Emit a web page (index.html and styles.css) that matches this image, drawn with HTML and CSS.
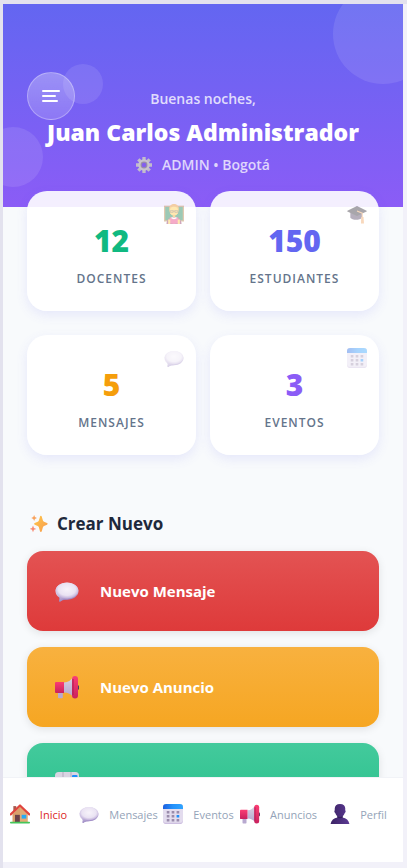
FILE: index.html
```html
<!DOCTYPE html>
<html lang="es">
<head>
    <meta charset="UTF-8">
    <meta name="viewport" content="width=device-width, initial-scale=1.0">
    <title>Inicio</title>
    <link rel="stylesheet" href="styles.css">
</head>
<body>
    <!-- Icon sprite -->
    <svg class="sprite" aria-hidden="true">
        <defs>
            <linearGradient id="g-bubble" x1="0" y1="0" x2="0.3" y2="1">
                <stop offset="0" stop-color="#f4f0fa"/>
                <stop offset="0.55" stop-color="#dcd2ea"/>
                <stop offset="1" stop-color="#9a86c2"/>
            </linearGradient>
            <radialGradient id="g-bubble-light" cx="0.5" cy="0.42" r="0.55">
                <stop offset="0" stop-color="#f7f3fa"/>
                <stop offset="0.7" stop-color="#eae3f3"/>
                <stop offset="1" stop-color="#c4b5dc"/>
            </radialGradient>
            <linearGradient id="g-cal" x1="0" y1="0" x2="1" y2="0">
                <stop offset="0" stop-color="#1b5fe0"/>
                <stop offset="0.5" stop-color="#2492fb"/>
                <stop offset="1" stop-color="#2fa4ff"/>
            </linearGradient>
            <linearGradient id="g-star" x1="0" y1="0" x2="1" y2="1">
                <stop offset="0" stop-color="#ffc84a"/>
                <stop offset="1" stop-color="#f79a4e"/>
            </linearGradient>
            <linearGradient id="g-pink" x1="0" y1="0" x2="0" y2="1">
                <stop offset="0" stop-color="#fb3d73"/>
                <stop offset="1" stop-color="#c9215e"/>
            </linearGradient>
            <linearGradient id="g-horn" x1="0" y1="0" x2="0" y2="1">
                <stop offset="0" stop-color="#d9d4e2"/>
                <stop offset="1" stop-color="#b3a3cf"/>
            </linearGradient>
            <linearGradient id="g-person" x1="0" y1="0" x2="1" y2="0">
                <stop offset="0" stop-color="#3b2364"/>
                <stop offset="1" stop-color="#5c3a94"/>
            </linearGradient>
        </defs>

        <symbol id="i-bubble" viewBox="0 0 24 24">
            <path d="M3.500 15.500 7.500 18.500 14 20l-6.500 1.300-2.300 1.300c-.5.300-1 0-.9-.6l.3-2.600z" fill="#9a86c2"/>
            <path d="M12 3.500C5.600 3.500.500 7.200.500 12c0 3 1.600 5.300 4.200 6.800l-.4 3.200c0 .6.500.9 1 .6L8.500 20.300c1.100.3 2.300.4 3.500.4 6.400 0 11.500-3.900 11.500-8.700S18.400 3.500 12 3.500z" fill="url(#g-bubble)"/>
            <ellipse cx="12" cy="11.600" rx="11.200" ry="7.900" fill="url(#g-bubble-light)"/>
        </symbol>

        <symbol id="i-calendar" viewBox="0 0 24 24">
            <rect width="24" height="24" rx="4" fill="#cdbfe0"/>
            <rect width="24" height="22.500" rx="4" fill="#e3dcee"/>
            <path d="M0 6V4a4 4 0 0 1 4-4h16a4 4 0 0 1 4 4v2z" fill="url(#g-cal)"/>
            <path d="M4.500 8.500h3.200v3H4.500zM10.400 8.500h3.200v3h-3.200zM16.300 8.500h3.200v3h-3.200zM4.500 13.200h3.200v3H4.500zM10.400 13.200h3.200v3h-3.200zM4.500 17.900h3.200v3H4.500zM10.400 17.900h3.200v3h-3.200zM16.300 17.900h3.200v3h-3.200z" fill="#9a8cab"/>
            <rect x="16.300" y="13.200" width="3.200" height="3" fill="#1f8ffa"/>
        </symbol>

        <symbol id="i-megaphone" viewBox="0 0 24 24">
            <path d="M3 16h4.800v6.500a.8.800 0 0 1-.8.800H3.800a.8.800 0 0 1-.8-.8z" fill="#b8a9d0"/>
            <path d="M9 7.500c4 0 7-2.500 9-5.500v20c-2-3-5-4.500-9-4.500z" fill="url(#g-horn)"/>
            <path d="M1 7h8v11H1a1 1 0 0 1-1-1V8a1 1 0 0 1 1-1z" fill="url(#g-pink)"/>
            <path d="M22 10c1.500 0 2.300 1 2.300 2.500S23.500 15 22 15z" fill="#4b3b63"/>
            <rect x="17" y="1" width="6" height="22.500" rx="3" fill="url(#g-pink)"/>
            <path d="M18 4v16" stroke="#a91a57" stroke-width="1"/>
        </symbol>

        <symbol id="i-chart" viewBox="0 0 24 24">
            <rect y="1" width="24" height="23" rx="3.500" fill="#d9d4e2"/>
            <path d="M8 1v23M16 1v23M0 8.500h24M0 16h24" stroke="#b3abc0" stroke-width="1"/>
            <rect x="2.500" y="12" width="5" height="12" fill="#35b566"/>
            <rect x="9.500" y="8" width="5" height="16" fill="#f0436b"/>
            <rect x="17" y="4" width="5.500" height="20" rx="1" fill="#1f8ffa"/>
        </symbol>

        <symbol id="i-house" viewBox="0 0 24 24">
            <path d="M4 2.500h3.500v6H4z" fill="#a85b4f"/>
            <path d="M3 12 12 3l9 9v10H3z" fill="#d9a06c"/>
            <path d="M12 3l9 9v10h-9z" fill="#e2ab76"/>
            <path d="M.800 12.500 12 1.800l11.200 10.700" fill="none" stroke="#e0453e" stroke-width="2.600" stroke-linecap="round" stroke-linejoin="round"/>
            <rect x="6" y="13" width="5.800" height="9" fill="#6b4149"/>
            <rect x="14" y="13" width="5.500" height="4.500" fill="#27a9f5"/>
            <rect y="21.300" width="24" height="2.200" rx="1" fill="#45c65a"/>
        </symbol>

        <symbol id="i-person" viewBox="0 0 24 24">
            <path d="M12 0c4.200 0 6.300 2.300 6.300 5.500 0 1.200-.1 1.800.1 2.300.8.800.3 2.600-.7 2.900-.5 2-1.700 3-2.700 3.900v1.700c4.500 1 7.500 3.200 8.300 7.700H.700c.8-4.500 3.800-6.700 8.300-7.700v-1.700c-1-.9-2.200-1.900-2.700-3.900-1-.3-1.500-2.100-.7-2.900.2-.5.100-1.100.1-2.300C5.700 2.300 7.800 0 12 0z" fill="url(#g-person)"/>
            <path d="M8.600 14.500c2 1.500 4.800 1.500 6.800 0v1.800c-2 1.200-4.800 1.200-6.800 0z" fill="#33205a"/>
        </symbol>

        <symbol id="i-teacher" viewBox="0 0 24 24">
            <path d="M0 2h24v19H0z" fill="#b5793c"/>
            <path d="M1.500 3.500h21v16h-21z" fill="#0b7a48"/>
            <path d="M3 24c0-5 3-8.500 9-8.500s9 3.500 9 8.500z" fill="#8a2557"/>
            <path d="M6.500 8C5.500 3 8 0 12 0s6.500 3 5.500 8l-1 4h-9z" fill="#f39b1f"/>
            <ellipse cx="12" cy="8.500" rx="5" ry="5.500" fill="#ffc83d"/>
            <path d="M7.500 8h3.500v2H7.500zM13 8h3.500v2H13zM11 8.500h2" fill="none" stroke="#6d5340" stroke-width=".8"/>
            <path d="M10.500 13h3v3h-3z" fill="#f39b1f"/>
            <path d="M7 16l5 1.500 5-1.500v7l-5 1-5-1z" fill="#e82f78"/>
            <path d="M9 15.500l3 1 3-1v1.800l-3 1-3-1z" fill="#fff"/>
            <path d="M5 18.500h2.500V24H5zM16.500 18.500H19V24h-2.500z" fill="#ffc83d"/>
        </symbol>

        <symbol id="i-cap" viewBox="0 0 24 24">
            <path d="M4 10v6.500c2 3 11 3.500 14 0V10z" fill="#4a3a5c"/>
            <path d="M12 2.500 23.500 8a.6.600 0 0 1 0 1L12 14.500.500 9a.6.600 0 0 1 0-1z" fill="#29242f"/>
            <path d="M12 8.500 18.300 11v5" fill="none" stroke="#f0a05a" stroke-width="1.300"/>
            <path d="M17 15.500h2.800l.6 8h-3.600z" fill="#f0a05a"/>
        </symbol>

        <symbol id="i-sparkles" viewBox="0 0 24 24">
            <path d="M14.500 1c.7 0 1 .5 1.200 1.200l1.500 5.200c.3.900.7 1.300 1.500 1.600l4 1.800c1 .4 1 1.800 0 2.200l-4 1.800c-.8.300-1.200.8-1.500 1.600l-1.500 5.400c-.3 1.100-2.100 1.100-2.400 0l-1.500-5.400c-.3-.8-.7-1.300-1.500-1.600L6.300 13c-1-.4-1-1.800 0-2.200l4-1.800c.8-.3 1.200-.7 1.500-1.600l1.500-5.200C13.500 1.500 13.800 1 14.500 1z" fill="url(#g-star)"/>
            <path d="M5.500 0l1.100 2.700L9.300 4 6.600 5.200 5.500 8 4.400 5.200 1.700 4l2.700-1.300z" fill="#f9a25c"/>
            <path d="M4 14l1.300 3.200L8.500 18.500 5.300 19.800 4 23l-1.300-3.200L-.5 18.500l3.200-1.300z" fill="#f78a72"/>
        </symbol>

        <symbol id="i-gear" viewBox="0 0 24 24">
            <g stroke="#c2bccb" stroke-width="5">
                <path d="M12 0v24M0 12h24M3.500 3.500l17 17M20.500 3.500l-17 17"/>
            </g>
            <circle cx="12" cy="12" r="8.500" fill="#c9c4cf"/>
            <circle cx="12" cy="12" r="5.200" fill="#9a90a8"/>
            <circle cx="12" cy="12" r="3.500" fill="#8360ee"/>
        </symbol>
    </svg>

    <div class="app">
        <main class="content">
            <header class="header">
                <span class="circle circle-lg"></span>
                <span class="circle circle-md"></span>
                <span class="circle circle-sm"></span>
                <button class="menu-btn" type="button" aria-label="Abrir menú">
                    <span class="bar"></span>
                    <span class="bar bar-short"></span>
                    <span class="bar bar-mid"></span>
                </button>
                <p class="greeting">Buenas noches,</p>
                <h1 class="user-name">Juan Carlos Administrador</h1>
                <p class="user-role">
                    <svg class="role-icon"><use href="#i-gear"/></svg>
                    <span>ADMIN • Bogotá</span>
                </p>
            </header>

            <section class="stats">
                <div class="stat-card">
                    <svg class="stat-icon"><use href="#i-teacher"/></svg>
                    <span class="stat-number green">12</span>
                    <span class="stat-label">DOCENTES</span>
                </div>
                <div class="stat-card">
                    <svg class="stat-icon"><use href="#i-cap"/></svg>
                    <span class="stat-number indigo">150</span>
                    <span class="stat-label">ESTUDIANTES</span>
                </div>
                <div class="stat-card">
                    <svg class="stat-icon"><use href="#i-bubble"/></svg>
                    <span class="stat-number amber">5</span>
                    <span class="stat-label">MENSAJES</span>
                </div>
                <div class="stat-card">
                    <svg class="stat-icon"><use href="#i-calendar"/></svg>
                    <span class="stat-number violet">3</span>
                    <span class="stat-label">EVENTOS</span>
                </div>
            </section>

            <section class="create">
                <h2 class="section-title">
                    <svg class="title-icon"><use href="#i-sparkles"/></svg>
                    Crear Nuevo
                </h2>
                <div class="actions">
                    <button class="action action-red" type="button">
                        <svg class="action-icon"><use href="#i-bubble"/></svg>
                        Nuevo Mensaje
                    </button>
                    <button class="action action-amber" type="button">
                        <svg class="action-icon"><use href="#i-megaphone"/></svg>
                        Nuevo Anuncio
                    </button>
                    <button class="action action-green" type="button" aria-label="Nueva Encuesta">
                        <svg class="action-icon"><use href="#i-chart"/></svg>
                    </button>
                </div>
            </section>
        </main>

        <nav class="bottom-nav">
            <a href="#inicio" class="nav-item active"><svg class="nav-icon"><use href="#i-house"/></svg>Inicio</a>
            <a href="#mensajes" class="nav-item"><svg class="nav-icon"><use href="#i-bubble"/></svg>Mensajes</a>
            <a href="#eventos" class="nav-item"><svg class="nav-icon"><use href="#i-calendar"/></svg>Eventos</a>
            <a href="#anuncios" class="nav-item"><svg class="nav-icon"><use href="#i-megaphone"/></svg>Anuncios</a>
            <a href="#perfil" class="nav-item"><svg class="nav-icon"><use href="#i-person"/></svg>Perfil</a>
        </nav>
    </div>
</body>
</html>
```
FILE: styles.css
```css
* {
    box-sizing: border-box;
    margin: 0;
    padding: 0;
}
body {
    height: 100vh;
    padding: 4px 4px 6px 3px;
    background: #f2f1f9;
    font-family: "Segoe UI", "Open Sans", "Noto Sans", sans-serif;
    box-shadow: inset 3px 4px 0 #e3e2ee;
}
button {
    border: none;
    font-family: inherit;
    cursor: pointer;
}
svg {
    flex-shrink: 0;
    overflow: visible;
}
.sprite {
    position: absolute;
    width: 0;
    height: 0;
}
.app {
    display: flex;
    flex-direction: column;
    height: 100%;
    overflow: hidden;
    background: #f8fafc;
}
.content {
    flex: 1;
    min-height: 0;
    overflow-y: auto;
    scrollbar-width: none;
}

/* Header */
.header {
    position: relative;
    overflow: hidden;
    padding: 85px 24px 32px;
    background: linear-gradient(180deg, #6366f1, #8b5cf6);
    text-align: center;
    color: white;
}
.circle {
    position: absolute;
    border-radius: 50%;
    background: rgba(255,255,255,0.1);
}
.circle-lg {
    width: 100px;
    height: 100px;
    top: -20px;
    right: -30px;
}
.circle-md {
    width: 60px;
    height: 60px;
    bottom: 20px;
    left: -20px;
}
.circle-sm {
    width: 40px;
    height: 40px;
    top: 60px;
    left: 60px;
}
.menu-btn {
    position: absolute;
    top: 68px;
    left: 24px;
    display: flex;
    flex-direction: column;
    justify-content: center;
    gap: 3px;
    width: 48px;
    height: 48px;
    padding-left: 14px;
    border: 1px solid rgba(255,255,255,0.3);
    border-radius: 50%;
    background: linear-gradient(180deg, rgba(255,255,255,0.3), rgba(255,255,255,0.15));
}
.bar {
    width: 18px;
    height: 2px;
    border-radius: 1px;
    background: white;
}
.bar-short { width: 14px; }
.bar-mid { width: 16px; }
.greeting {
    margin-bottom: 5px;
    font-size: 14px;
    font-weight: 600;
    line-height: 20px;
    color: rgba(255,255,255,0.8);
}
.user-name {
    position: relative;
    margin-bottom: 5px;
    font-size: 23px;
    font-weight: 800;
    line-height: 36px;
    white-space: nowrap;
}
.user-role {
    display: flex;
    align-items: center;
    justify-content: center;
    gap: 10px;
    font-size: 14px;
    font-weight: 600;
    line-height: 20px;
    color: rgba(255,255,255,0.75);
}
.role-icon {
    width: 16px;
    height: 16px;
}

/* Stats */
.stats {
    position: relative;
    display: grid;
    grid-template-columns: 1fr 1fr;
    gap: 24px 14px;
    margin-top: -16px;
    padding: 0 24px;
}
.stat-card {
    position: relative;
    display: flex;
    flex-direction: column;
    align-items: center;
    justify-content: center;
    height: 120px;
    padding-top: 8px;
    border-radius: 20px;
    background: rgba(255,255,255,0.9);
    box-shadow: 0 4px 12px rgba(99,102,241,0.12);
}
.stat-icon {
    position: absolute;
    top: 13px;
    right: 12px;
    width: 20px;
    height: 20px;
    opacity: 0.4;
}
.stat-number {
    font-size: 30px;
    font-weight: 800;
    line-height: 40px;
}
.stat-label {
    margin-top: 8px;
    font-size: 12px;
    font-weight: 600;
    line-height: 20px;
    letter-spacing: 1px;
    color: #64748b;
}
.green { color: #10b981; }
.indigo { color: #6366f1; }
.amber { color: #f59e0b; }
.violet { color: #8b5cf6; }

/* Create actions */
.create {
    padding: 57px 24px 24px;
}
.section-title {
    display: flex;
    align-items: center;
    gap: 9px;
    margin-bottom: 15px;
    padding-left: 3px;
    font-size: 17px;
    font-weight: 700;
    line-height: 24px;
    color: #1e293b;
}
.title-icon {
    width: 18px;
    height: 18px;
}
.actions {
    display: flex;
    flex-direction: column;
    gap: 16px;
}
.action {
    display: flex;
    align-items: center;
    gap: 21px;
    height: 80px;
    padding: 0 28px;
    border-radius: 16px;
    font-size: 15px;
    font-weight: 700;
    color: white;
    box-shadow: 0 2px 8px rgba(0,0,0,0.1);
}
.action-icon {
    width: 24px;
    height: 24px;
}
.action-red { background: linear-gradient(180deg, #e35353, #de3a3a); }
.action-amber { background: linear-gradient(180deg, #f8b13f, #f6a622); }
.action-green { background: linear-gradient(180deg, #43ca9c, #27bf8a); }

/* Bottom navigation */
.bottom-nav {
    display: flex;
    height: 85px;
    padding-bottom: 12px;
    border-top: 1px solid #f1f3f7;
    background: white;
}
.nav-item {
    display: flex;
    flex: 1 1 0;
    align-items: center;
    justify-content: center;
    gap: 10px;
    min-width: 0;
    padding-right: 9px;
    font-size: 11px;
    font-weight: 500;
    color: #94a3b8;
    text-decoration: none;
}
.nav-item.active { color: #dc2626; }
.nav-icon {
    width: 20px;
    height: 20px;
}
```
